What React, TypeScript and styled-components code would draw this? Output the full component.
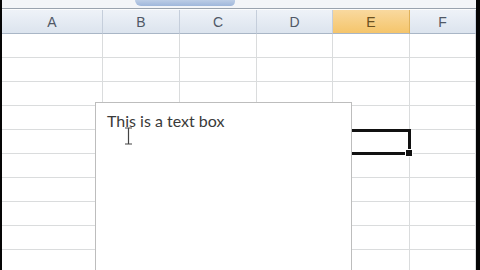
import styled, { createGlobalStyle } from "styled-components";

const GlobalStyle = createGlobalStyle`
  html, body {
    margin: 0;
    padding: 0;
    width: 480px;
    height: 270px;
    overflow: hidden;
    background: #fff;
  }
`;

const Screen = styled.div`
  display: flex;
  width: 480px;
  height: 270px;
  background: #000;
  overflow: hidden;
`;

const Edge = styled.div<{ $w: number }>`
  width: ${(p) => p.$w}px;
  flex: none;
  background: #050505;
`;

const Sheet = styled.div`
  position: relative;
  flex: 1;
  background: #fff;
  overflow: hidden;
`;

const TopStrip = styled.div`
  display: flex;
  height: 9px;
  box-sizing: border-box;
  padding-left: 133px;
  background: #f3f5f8;
  border-bottom: 1px solid #9aa3ae;
`;

const Tab = styled.div`
  width: 100px;
  height: 6px;
  background: linear-gradient(#bccde6, #9fb7db);
  border-radius: 0 0 6px 8px;
`;

const Spacer = styled.div`
  height: 1px;
  background: #fbfcfd;
`;

const Grid = styled.div`
  display: grid;
  grid-template-columns: 101px 77px 77px 76px 77px 66px;
`;

const Head = styled.div<{ $active?: boolean }>`
  height: 24px;
  box-sizing: border-box;
  display: flex;
  align-items: center;
  justify-content: center;
  font-family: "Liberation Sans", Arial, sans-serif;
  font-size: 14px;
  color: ${(p) => (p.$active ? "#6a5020" : "#505866")};
  background: ${(p) =>
    p.$active
      ? "linear-gradient(#f9d99f, #f5c56b)"
      : "linear-gradient(#eef2f8, #dce4ee)"};
  border-right: 1px solid ${(p) => (p.$active ? "#e0b25a" : "#c5cedb")};
  border-bottom: 1px solid #a9b6c6;
`;

const Cell = styled.div<{ $selected?: boolean }>`
  position: relative;
  height: 24px;
  box-sizing: border-box;
  border-right: 1px solid #dadcdd;
  border-bottom: 1px solid #dadcdd;
  ${(p) =>
    p.$selected &&
    `
    outline: 3px solid #111;
    outline-offset: -2px;
    z-index: 1;
  `}
`;

const Handle = styled.div`
  position: absolute;
  right: -4px;
  bottom: -4px;
  width: 6px;
  height: 6px;
  background: #111;
  border: 1px solid #fff;
`;

const TextBox = styled.div`
  position: absolute;
  left: 93px;
  top: 102px;
  width: 257px;
  height: 200px;
  box-sizing: border-box;
  padding: 8px 11px;
  background: #fff;
  border: 1px solid #bdbdbd;
  z-index: 2;
  font-family: Lato, "Open Sans", sans-serif;
  font-size: 16px;
  line-height: 20px;
  color: #3a3a3a;
`;

const Cursor = styled.svg`
  position: absolute;
  left: 28px;
  top: 24px;
`;

const columns = ["A", "B", "C", "D", "E", "F"];
const rowCount = 10;

export default function App() {
  return (
    <>
      <GlobalStyle />
      <Screen>
        <Edge $w={2} />
        <Sheet>
          <TopStrip>
            <Tab />
          </TopStrip>
          <Spacer />
          <Grid>
            {columns.map((c) => (
              <Head key={c} $active={c === "E"}>
                {c}
              </Head>
            ))}
            {Array.from({ length: rowCount }).map((_, r) =>
              columns.map((c) => {
                const selected = r === 4 && c === "E";
                return (
                  <Cell key={`${c}${r}`} $selected={selected}>
                    {selected && <Handle />}
                  </Cell>
                );
              })
            )}
          </Grid>
          <TextBox>
            This is a text box
            <Cursor width="9" height="18" viewBox="0 0 9 18">
              <path
                d="M1 1h7M4.5 1v16M1 17h7"
                stroke="#444"
                strokeWidth="1.2"
                fill="none"
              />
            </Cursor>
          </TextBox>
        </Sheet>
        <Edge $w={4} />
      </Screen>
    </>
  );
}
